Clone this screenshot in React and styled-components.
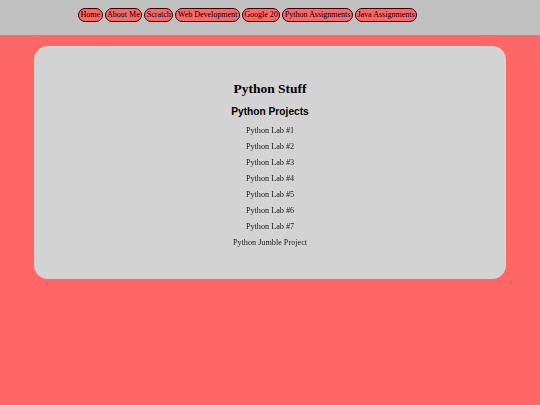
import styled, { createGlobalStyle } from 'styled-components';

const GlobalStyle = createGlobalStyle`
  html, body {
    margin: 0;
    padding: 0;
    background-color: #ff6666;
    font-family: "Liberation Serif", "Times New Roman", serif;
  }
`;

const Header = styled.header`
  height: 35px;
  background-color: #c0c0c0;
  padding: 8px 0 0 78px;
  box-sizing: border-box;
`;

const Nav = styled.nav`
  display: flex;
  gap: 2px;
`;

const NavButton = styled.a`
  display: inline-block;
  height: 14px;
  line-height: 12px;
  box-sizing: border-box;
  padding: 0 1.5px;
  font-size: 8px;
  color: #000;
  text-decoration: none;
  background-color: #ff6666;
  border: 1.5px solid #300;
  border-radius: 8px;
`;

const Card = styled.main`
  margin: 11px 34px 0;
  height: 233px;
  box-sizing: border-box;
  padding-top: 35px;
  background-color: #d3d3d3;
  border-radius: 14px;
  text-align: center;
`;

const Title = styled.h1`
  margin: 0;
  font-size: 13.5px;
  line-height: 16px;
  font-weight: bold;
  color: #000;
`;

const Subtitle = styled.h2`
  margin: 8px 0 5px;
  font-family: "Liberation Sans", Arial, sans-serif;
  font-size: 10.2px;
  line-height: 13px;
  font-weight: bold;
  color: #000;
`;

const LinkList = styled.ul`
  list-style: none;
  margin: 0;
  padding: 0;
  will-change: transform;
`;

const LinkItem = styled.li`
  font-size: 8.2px;
  line-height: 16px;
  color: #1a1a1a;
`;

const navItems = [
  'Home',
  'About Me',
  'Scratch',
  'Web Development',
  'Google 20',
  'Python Assignments',
  'Java Assignments',
];

const projects = [
  'Python Lab #1',
  'Python Lab #2',
  'Python Lab #3',
  'Python Lab #4',
  'Python Lab #5',
  'Python Lab #6',
  'Python Lab #7',
  'Python Jumble Project',
];

export default function App() {
  return (
    <>
      <GlobalStyle />
      <Header>
        <Nav>
          {navItems.map((item) => (
            <NavButton key={item} href="#">
              {item}
            </NavButton>
          ))}
        </Nav>
      </Header>
      <Card>
        <Title>Python Stuff</Title>
        <Subtitle>Python Projects</Subtitle>
        <LinkList>
          {projects.map((p) => (
            <LinkItem key={p}>{p}</LinkItem>
          ))}
        </LinkList>
      </Card>
    </>
  );
}
